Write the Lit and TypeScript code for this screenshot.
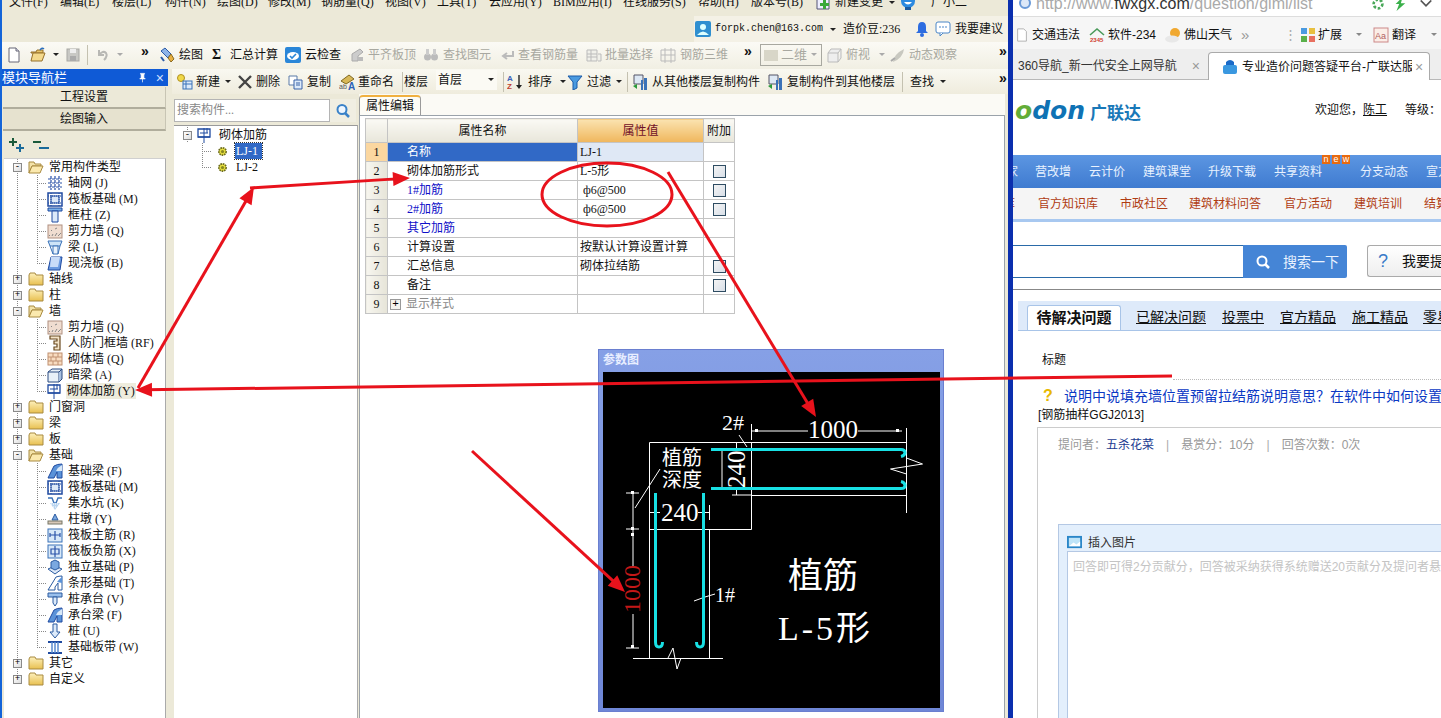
import { LitElement, css, html, svg } from "lit";
import { customElement } from "lit/decorators.js";

// small icon helper, everything is drawn on a 16x16 box
const ic = (body: unknown, w = 16, h = 16) =>
  html`<svg class="ic" width=${w} height=${h} viewBox="0 0 16 16">${body}</svg>`;

const icons: Record<string, unknown> = {
  file: svg`<path d="M3 1h7l3 3v11H3z" fill="#fff" stroke="#667"/><path d="M10 1v3h3" fill="#dde" stroke="#667"/>`,
  open: svg`<path d="M1 5h5l1-2h6v3H1z" fill="#e8c468" stroke="#96702a"/><path d="M1 14l2-8h12l-3 8z" fill="#f4d98c" stroke="#96702a"/><path d="M10 3q2-3 4-1" fill="none" stroke="#2a6fc0" stroke-width="1.4"/>`,
  save: svg`<rect x="2" y="2" width="12" height="12" fill="#c8c8c4" stroke="#a8a8a4"/><rect x="5" y="2" width="6" height="4" fill="#eee"/><rect x="5" y="9" width="6" height="5" fill="#aaa"/>`,
  undo: svg`<path d="M4 3v5h5M4 8q4-5 7-2q2 3-2 7" fill="none" stroke="#b8b8b4" stroke-width="2"/>`,
  draw: svg`<path d="M2 4l4-3 6 6-3 4z" fill="#8fb4e8" stroke="#2a5aa8"/><path d="M9 11l3-4 3 5-3 3z" fill="#e8b040" stroke="#8a6a20"/><path d="M2 10l3 4" stroke="#2a5aa8" stroke-width="2"/>`,
  cloud: svg`<rect x="0" y="0" width="16" height="16" rx="2" fill="#2a86d8"/><ellipse cx="8" cy="9" rx="6" ry="4" fill="#fff"/><path d="M5 9l2 2 4-4" fill="none" stroke="#2a86d8" stroke-width="1.6"/>`,
  g1: svg`<path d="M3 14V7l8-5 3 3-5 4v5z" fill="#ccc" stroke="#aaa"/><rect x="9" y="10" width="5" height="4" fill="#bbb"/>`,
  g2: svg`<circle cx="4.500" cy="10" r="3.500" fill="#bbb"/><circle cx="11.500" cy="10" r="3.500" fill="#bbb"/><rect x="3" y="2" width="3" height="6" fill="#ccc"/><rect x="10" y="2" width="3" height="6" fill="#ccc"/>`,
  g3: svg`<path d="M14 4v5H5M8 6L4 9l4 3" fill="none" stroke="#bbb" stroke-width="2"/>`,
  g4: svg`<path d="M1 3h10v11H1zM1 7h10M1 10h10M5 3v11M12 7h3v7h-3" fill="#f0f0ea" stroke="#bbb"/>`,
  g5: svg`<path d="M1 3h14v11H1zM5 1v15M11 1v15M1 8h14" fill="none" stroke="#bbb"/>`,
  g6: svg`<path d="M2 6h10v9H2zM2 6l3-4h10l-3 4M12 15l3-4V2" fill="#eee" stroke="#bbb"/>`,
  g7: svg`<path d="M3 15q1-8 11-13q-1 9-11 13z" fill="#c8c8c0"/><path d="M1 14l4-3" stroke="#aaa" stroke-width="2"/>`,
  user: svg`<rect x="0" y="0" width="16" height="16" rx="2" fill="#2f8fd0"/><circle cx="8" cy="6" r="3" fill="#dff"/><path d="M2 14q6-7 12 0z" fill="#dff"/>`,
  bell: svg`<path d="M8 1q4 0 4 5v4l2 2H2l2-2V6q0-5 4-5z" fill="#2d6ce0"/><circle cx="8" cy="14" r="2" fill="#2d6ce0"/>`,
  chat: svg`<rect x="1" y="1" width="14" height="11" rx="2" fill="#fff" stroke="#4a86c8"/><path d="M5 12v3l3-3" fill="#fff" stroke="#4a86c8"/><path d="M4 6h8" stroke="#4a86c8" stroke-dasharray="2 1"/>`,
  change: svg`<path d="M2 1h9l3 3v11H2z" fill="#eef" stroke="#557"/><path d="M11 6v3h3v3h-3v3H8v-3H5V9h3V6z" fill="#3aa83a"/>`,
  mascot: svg`<circle cx="8" cy="7" r="7" fill="#2b8ae0"/><path d="M4 8q4 5 8 0z" fill="#fff"/><rect x="5" y="13" width="6" height="3" fill="#1a5aa0"/>`,
  add: svg`<circle cx="4" cy="4" r="3.500" fill="#f0d848" stroke="#b09020"/><rect x="6" y="7" width="9" height="8" fill="#dceafa" stroke="#3a72b8"/><path d="M6 10h9M9 7v8" stroke="#3a72b8"/>`,
  del: svg`<path d="M2 2l12 12M14 2L2 14" stroke="#444" stroke-width="2.400"/>`,
  copy: svg`<path d="M1 2h8v9H1z" fill="#fff" stroke="#5a7aa8"/><path d="M6 6h8v9H6z" fill="#dceafa" stroke="#3a62a8"/><path d="M8 9h4M8 11h4" stroke="#3a62a8"/>`,
  rename: svg`<path d="M2 7l8-6 5 4-8 5z" fill="#d8b858" stroke="#806820"/><text x="0" y="15" font-size="7" fill="#555" font-family="Liberation Sans">ab</text><text x="9" y="16" font-size="10" font-weight="700" fill="#2a62b8" font-family="Liberation Sans">A</text>`,
  sort: svg`<text x="0" y="7" font-size="8" font-weight="700" fill="#3a62b8" font-family="Liberation Sans">A</text><text x="0" y="15" font-size="8" font-weight="700" fill="#c04030" font-family="Liberation Sans">Z</text><path d="M12 1v12" stroke="#222" stroke-width="1.400"/><path d="M9 11l3 4 3-4z" fill="#222"/>`,
  filter: svg`<path d="M1 2h14L10 8v6l-4 2V8z" fill="#4a9ae0" stroke="#1a5aa8"/>`,
  from: svg`<path d="M2 1h9v9H2z" fill="#dde8f4" stroke="#556"/><path d="M1 12l4-2v5z" fill="#2a9a3a"/><path d="M9 6h2v10H9zM12 4h3v12h-3z" fill="#3a72b8"/>`,
  folder: svg`<path d="M1 4l1-2h5l1 2h7v10H1z" fill="url(#fg)" stroke="#a88a40"/>`,
  folderOpen: svg`<path d="M1 3h5l1 2h6v2H4l-3 7z" fill="#f3e2a8" stroke="#a88a40"/><path d="M1 14l3-7h11l-3 7z" fill="#fbe9ae" stroke="#a88a40"/>`,
  grid: svg`<path d="M1 4h14M1 8h14M1 12h14M4 1v14M8 1v14M12 1v14" stroke="#2a52a8" stroke-width="1.200" stroke-dasharray="3 1"/>`,
  raft: svg`<rect x="1" y="2" width="14" height="13" fill="#fff" stroke="#1f4aa0" stroke-width="1.500"/><rect x="4" y="5" width="8" height="7" fill="#dce8f8" stroke="#1f4aa0"/><path d="M1 5h14M1 12h14M4 2v13M12 2v13" stroke="#1f4aa0" stroke-dasharray="1 1"/>`,
  col: svg`<path d="M1 1h14v3H1z" fill="#7ab0e8" stroke="#1f4aa0"/><path d="M5 4h6v11H5z" fill="#dceafa" stroke="#1f4aa0"/>`,
  shear: svg`<rect x="1" y="2" width="14" height="13" fill="#f0ddd0" stroke="#b09080"/><path d="M2 13l1-1M5 13l1-2M8 13l2-3M11 13l3-3M4 8l1-1M8 6l2-1" stroke="#888"/>`,
  beam: svg`<path d="M1 2h14l-2 5H3z" fill="#cde4f8" stroke="#3a72b8"/><path d="M6 7h5v8H6zM3 7l3 8M13 7l-2 8" fill="#e8f2fc" stroke="#3a72b8"/>`,
  slab: svg`<path d="M4 2h11l-2 13H1z" fill="#6a9ae0" stroke="#1f4aa0"/><path d="M4 2h9l-2 10H3z" fill="#c8dcf8"/>`,
  door: svg`<path d="M3 1h10v14H7v-3h3V9H7V6h3V4H3z" fill="#f4e4c8" stroke="#6a4a20" stroke-width="1.200"/>`,
  brick: svg`<rect x="1" y="2" width="14" height="12" fill="#f8dcc0" stroke="#c09070"/><path d="M1 6h14M1 10h14M6 2v4M11 2v4M4 6v4M9 6v4M6 10v4M11 10v4" stroke="#c09070"/>`,
  dark: svg`<path d="M1 5l4-3h10l-3 3v10H1z" fill="#e8f0f8" stroke="#2a4a80"/><path d="M1 5h11M12 5l3-3v10l-3 3" fill="#a8c0e0" stroke="#2a4a80"/>`,
  masonry: svg`<path d="M1 2h12v8H1z" fill="#fff" stroke="#1f4aa0" stroke-width="1.300"/><path d="M7 1v15M1 10h12M3 6h8M10 1v5" stroke="#1f4aa0"/>`,
  fbeam: svg`<path d="M1 15l6-12q3-2 8-2v14H10V9l-3 6z" fill="#5a92d8" stroke="#1f4aa0"/><path d="M9 8q2-4 6-6v6z" fill="#d8e8f8"/>`,
  pit: svg`<path d="M1 3h4l2 5h2l2-5h4" fill="none" stroke="#3a72b8" stroke-width="1.400"/><path d="M3 8l5 7 5-7z" fill="#b8d4f0"/><path d="M4 9h8M6 12h4" stroke="#fff" stroke-dasharray="1 1"/>`,
  pier: svg`<path d="M8 3l3 6H5z" fill="#7aa8e0" stroke="#2a5aa0"/><rect x="1" y="10" width="14" height="3" fill="#d8c8b8" stroke="#776"/>`,
  main: svg`<rect x="1" y="2" width="14" height="13" fill="#d8e8f8" stroke="#3a72b8"/><path d="M8 4v9M3 8h10M3 6v4M13 6v4" stroke="#2a52a8" stroke-width="1.200"/>`,
  neg: svg`<rect x="1" y="2" width="14" height="13" fill="#d8e8f8" stroke="#3a72b8"/><path d="M8 3v11M4 6h8v5H4z" fill="none" stroke="#2a52a8" stroke-width="1.200"/>`,
  iso: svg`<path d="M1 10l7-3 7 3-7 5z" fill="#dce8f8" stroke="#2a5aa0"/><path d="M4 3l4-2 4 2v6l-4 2-4-2z" fill="#7aa8e0" stroke="#2a5aa0"/>`,
  strip: svg`<path d="M1 15l5-8 3-5q3-1 6-1v14h-4V8l-3 4v3z" fill="#fff" stroke="#2a5aa0"/><path d="M10 7q2-3 5-5v6z" fill="#5a92d8"/>`,
  cap: svg`<path d="M1 2h14v4H1z" fill="#9ac0ec" stroke="#2a5aa0"/><path d="M6 6h4v6l-2 3-2-3z" fill="#dceafa" stroke="#2a5aa0"/>`,
  pile: svg`<path d="M6 1h4v8h3l-5 6-5-6h3z" fill="#dceafa" stroke="#2a5aa0"/>`,
  band: svg`<path d="M1 3h14M1 14h14" stroke="#1f4aa0" stroke-width="2"/><path d="M5 3v11M8 3v11M11 3v11" stroke="#5a8ad0" stroke-width="1.500"/>`,
  gear: svg`<circle cx="8" cy="8" r="4.500" fill="#e8e040" stroke="#6a6a20" stroke-dasharray="2 1" stroke-width="2"/><circle cx="8" cy="8" r="2" fill="#8a8a20"/>`,
};

const tree: [string, string, string?][] = [
  ["open", "常用构件类型"],
  ["c", "轴网 (J)", "grid"],
  ["c", "筏板基础 (M)", "raft"],
  ["c", "框柱 (Z)", "col"],
  ["c", "剪力墙 (Q)", "shear"],
  ["c", "梁 (L)", "beam"],
  ["l", "现浇板 (B)", "slab"],
  ["closed", "轴线"],
  ["closed", "柱"],
  ["open", "墙"],
  ["c", "剪力墙 (Q)", "shear"],
  ["c", "人防门框墙 (RF)", "door"],
  ["c", "砌体墙 (Q)", "brick"],
  ["c", "暗梁 (A)", "dark"],
  ["l", "砌体加筋 (Y)", "masonry"],
  ["closed", "门窗洞"],
  ["closed", "梁"],
  ["closed", "板"],
  ["open", "基础"],
  ["c", "基础梁 (F)", "fbeam"],
  ["c", "筏板基础 (M)", "raft"],
  ["c", "集水坑 (K)", "pit"],
  ["c", "柱墩 (Y)", "pier"],
  ["c", "筏板主筋 (R)", "main"],
  ["c", "筏板负筋 (X)", "neg"],
  ["c", "独立基础 (P)", "iso"],
  ["c", "条形基础 (T)", "strip"],
  ["c", "桩承台 (V)", "cap"],
  ["c", "承台梁 (F)", "fbeam"],
  ["c", "桩 (U)", "pile"],
  ["l", "基础板带 (W)", "band"],
  ["closed", "其它"],
  ["closed", "自定义"],
];

type Item = { x: number; i?: string; t?: string; off?: boolean; k?: string; g?: number };

const menu: Item[] = [
  { x: 9, t: "文件(F)" }, { x: 60, t: "编辑(E)" }, { x: 112, t: "楼层(L)" }, { x: 165, t: "构件(N)" },
  { x: 217, t: "绘图(D)" }, { x: 268, t: "修改(M)" }, { x: 321, t: "钢筋量(Q)" }, { x: 385, t: "视图(V)" },
  { x: 437, t: "工具(T)" }, { x: 489, t: "云应用(Y)" }, { x: 553, t: "BIM应用(I)" }, { x: 623, t: "在线服务(S)" },
  { x: 698, t: "帮助(H)" }, { x: 751, t: "版本号(B)" }, { x: 815, i: "change", t: "新建变更", g: 4 },
  { x: 888, k: "dd" }, { x: 900, i: "mascot", t: "广小二", g: 15 },
];

const account: Item[] = [
  { x: 695, i: "user" }, { x: 715, t: "forpk.chen@163.com", k: "mono" }, { x: 829, k: "dd" }, { x: 843, t: "造价豆:236" },
  { x: 914, i: "bell" }, { x: 935, i: "chat", t: "我要建议", g: 4 },
];

const tools: Item[] = [
  { x: 6, i: "file" }, { x: 30, i: "open" }, { x: 52, k: "dd" }, { x: 65, i: "save" }, { x: 87, k: "sep" }, { x: 95, i: "undo" },
  { x: 116, k: "dd off" }, { x: 141, t: "»", k: "more" }, { x: 159, i: "draw", t: "绘图", g: 4 }, { x: 212, t: "Σ", k: "sigma" },
  { x: 230, t: "汇总计算" }, { x: 285, i: "cloud", t: "云检查", g: 4 }, { x: 349, i: "g1", t: "平齐板顶", off: true, g: 3 },
  { x: 423, i: "g2", t: "查找图元", off: true, g: 4 }, { x: 499, i: "g3", t: "查看钢筋量", off: true, g: 3 },
  { x: 586, i: "g4", t: "批量选择", off: true, g: 3 }, { x: 660, i: "g5", t: "钢筋三维", off: true, g: 4 },
  { x: 744, t: "»", k: "more" }, { x: 760, t: "二维", k: "combo" }, { x: 826, i: "g6", t: "俯视", off: true, g: 4 },
  { x: 878, k: "dd off" }, { x: 890, i: "g7", t: "动态观察", off: true, g: 3 }, { x: 999, t: "»", k: "more" },
];

const tools2: Item[] = [
  { x: 177, i: "add", t: "新建", g: 3 }, { x: 224, k: "dd" }, { x: 237, i: "del", t: "删除", g: 3 }, { x: 288, i: "copy", t: "复制", g: 3 },
  { x: 339, i: "rename", t: "重命名", g: 3 }, { x: 402, k: "sep" }, { x: 404, t: "楼层" }, { x: 436, t: "首层", k: "floor" },
  { x: 503, k: "sep" }, { x: 507, i: "sort", t: "排序", g: 5 }, { x: 559, k: "dd" }, { x: 567, i: "filter", t: "过滤", g: 4 },
  { x: 615, k: "dd" }, { x: 627, k: "sep" }, { x: 632, i: "from", t: "从其他楼层复制构件", g: 4 },
  { x: 767, i: "from", t: "复制构件到其他楼层", g: 4 }, { x: 902, k: "sep" }, { x: 910, t: "查找" }, { x: 939, k: "dd" },
  { x: 999, t: "»", k: "more" },
];

const rows = [
  { n: "名称", v: "LJ-1", sel: true },
  { n: "砌体加筋形式", v: "L-5形", chk: true },
  { n: "1#加筋", v: "\u00a0ф6@500", chk: true, blue: true },
  { n: "2#加筋", v: "\u00a0ф6@500", chk: true, blue: true },
  { n: "其它加筋", v: "", blue: true },
  { n: "计算设置", v: "按默认计算设置计算" },
  { n: "汇总信息", v: "砌体拉结筋", chk: true },
  { n: "备注", v: "", chk: true },
  { n: "显示样式", v: "", plus: true },
];

const cells = (items: Item[], end: number) =>
  items.map((it, n) => {
    const next = n + 1 < items.length ? items[n + 1].x : end;
    const k = it.k ?? "";
    return html`<div class="cell ${it.off ? "off" : ""}" style="width:${next - it.x}px">
      ${k.startsWith("dd") ? html`<i class="dd ${k}"></i>` : ""}
      ${k === "sep" ? html`<i class="sep"></i>` : ""}
      ${it.i ? ic(icons[it.i]) : ""}
      ${it.t
        ? html`<span class=${k} style=${it.g ? `margin-left:${it.g}px` : ""}>${it.t}${k === "floor" || k === "combo" ? html`<i class="dd ${k === "combo" ? "off" : ""}"></i>` : ""}</span>`
        : ""}
    </div>`;
  });

const navLinks: [number, string][] = [
  [1006, "家"], [1035, "营改增"], [1089, "云计价"], [1143, "建筑课堂"], [1208, "升级下载"], [1274, "共享资料"], [1360, "分支动态"], [1426, "宣方"],
];
const subLinks: [number, string][] = [
  [1003, "库"], [1038, "官方知识库"], [1120, "市政社区"], [1189, "建筑材料问答"], [1284, "官方活动"], [1354, "建筑培训"], [1424, "结算"],
];
const qTabs: [number, string][] = [
  [1137, "已解决问题"], [1223, "投票中"], [1281, "官方精品"], [1353, "施工精品"], [1424, "零星"],
];

const arrow = (x1: number, y1: number, x2: number, y2: number) => {
  const a = Math.atan2(y2 - y1, x2 - x1);
  const p = (l: number, s: number) =>
    `${x2 - l * Math.cos(a) - s * Math.sin(a)},${y2 - l * Math.sin(a) + s * Math.cos(a)}`;
  return svg`<line x1=${x1} y1=${y1} x2=${x2 - 10 * Math.cos(a)} y2=${y2 - 10 * Math.sin(a)} /><polygon points="${x2},${y2} ${p(17, 7)} ${p(17, -7)}" />`;
};

@customElement("app-root")
export class AppRoot extends LitElement {
  static styles = css`
    :host {
      display: block;
      width: 1441px;
      height: 718px;
      overflow: hidden;
      position: relative;
      font: 12px/16px "Liberation Serif", "Noto Sans CJK SC", sans-serif;
      color: #111;
      background: #ece9d8;
    }
    .ic { flex: none; display: block; }
    .frame { display: flex; height: 718px; }
    .app { width: 1008px; flex: none; display: flex; flex-direction: column; overflow: hidden; background: #ece9d8; border-left: 2px solid #1464d8; box-sizing: border-box; }
    .divider { width: 5px; flex: none; background: #0b2fae; }
    .cell { display: flex; align-items: center; flex: none; white-space: nowrap; height: 100%; }
    .off { color: #a8a8a0; }
    .dd { display: inline-block; width: 0; height: 0; border: 3px solid transparent; border-top: 3px solid #222; border-bottom: 0; margin-left: 1px; }
    .dd.off { border-top-color: #aaa; }
    .sep { display: block; width: 1px; height: 20px; background: #c4c1b0; }
    .more { font: 700 14px/14px "Liberation Sans", sans-serif; margin-top: -8px; }
    .sigma { font: 700 14px/16px "Liberation Serif", serif; }
    .mono { font: 10px/16px "Liberation Mono", monospace; }
    .combo { display: flex; align-items: center; justify-content: space-between; box-sizing: border-box; width: 62px; height: 22px; padding: 0 4px 0 20px; border: 1px solid #a8a8a0; color: #a8a8a0; font-size: 13px; background: linear-gradient(#d8d6c8, #d8d6c8) no-repeat 3px 5px / 14px 11px; }
    .floor { display: flex; align-items: center; justify-content: space-between; box-sizing: border-box; width: 61px; height: 20px; padding: 0 3px 0 2px; background: #fbfaf4; font-size: 12px; margin-top: -4px; }
    .menu { height: 16px; overflow: hidden; }
    .menu-in { display: flex; height: 16px; margin-top: -6px; padding-left: 7px; font-size: 12px; }
    .acct-row { height: 26px; display: flex; justify-content: flex-end; }
    .acct { display: flex; width: 314px; background: #f4f1e6; padding-left: 1px; box-sizing: border-box; }
    .tools { height: 27px; display: flex; padding: 0 0 2px 4px; box-sizing: border-box; background: linear-gradient(#fbfaf5, #f1efe3); }
    .body { flex: 1; display: flex; min-height: 0; }
    .nav { width: 170px; flex: none; display: flex; flex-direction: column; }
    .nav-title { height: 17px; width: 166px; flex: none; background: #0f5ad6; color: #fff; font-size: 13px; display: flex; justify-content: space-between; align-items: center; padding: 0 4px 0 0; box-sizing: border-box; }
    .nav-ctl { display: flex; align-items: center; gap: 8px; font: 14px/14px "Liberation Sans", sans-serif; color: #cfe0ff; }
    .nav-btn { width: 163px; height: 22px; flex: none; margin-left: 1px; box-sizing: border-box; text-align: center; line-height: 21px; border-bottom: 2px solid #b0ad9c; border-right: 1px solid #c8c5b4; margin-top: 1px; }
    .nav-btn + .nav-btn { margin-top: 0; }
    .nav-btn.on { background: #e6e2cf; }
    .plus-row { height: 27px; flex: none; display: flex; gap: 8px; align-items: center; padding-left: 7px; width: 160px; }
    .tree { width: 161px; flex: 1; margin-left: 2px; background: #fff; border-right: 1px solid #aaa; border-top: 1px solid #d0d0d0; }
    .row { display: flex; height: 16px; align-items: center; white-space: nowrap; }
    .expw { width: 19px; height: 16px; flex: none; display: flex; align-items: center; justify-content: center; margin-left: 4px; background: repeating-linear-gradient(to bottom, #888 0 1px, transparent 1px 2px) no-repeat 9px 0 / 1px 100%; }
    .expw.end { background-size: 1px 50%; }
    .exp { width: 9px; height: 9px; box-sizing: border-box; border: 1px solid #8a8a8a; background: linear-gradient(135deg, #fff, #ddd); display: flex; align-items: center; justify-content: center; font: 9px/7px "Liberation Mono", monospace; color: #000; }
    .tail { width: 20px; height: 16px; flex: none; background:
      repeating-linear-gradient(to bottom, #888 0 1px, transparent 1px 2px) no-repeat 10px 0 / 1px 100%,
      repeating-linear-gradient(to right, #888 0 1px, transparent 1px 2px) no-repeat 10px 8px / 10px 1px; }
    .tail.last { background-size: 1px 50%, 10px 1px; }
    .lab { margin-left: 4px; padding: 0 1px; }
    .lab.cur { background: #eeecdd; margin-left: 3px; }
    .main-col { flex: 1; display: flex; flex-direction: column; min-width: 0; }
    .tools2 { height: 25px; flex: none; display: flex; padding-left: 5px; background: linear-gradient(#f9f8f1, #efecdd); }
    .panes { flex: 1; display: flex; min-height: 0; }
    .list { width: 186px; flex: none; padding-left: 2px; display: flex; flex-direction: column; box-sizing: border-box; }
    .search { height: 25px; margin-top: 4px; display: flex; align-items: center; flex: none; }
    .search .inp { width: 156px; height: 23px; box-sizing: border-box; border: 1px solid #b4b4b4; background: #fff; color: #888; line-height: 21px; padding-left: 2px; }
    .search .btn { width: 26px; height: 23px; background: #f0eee2; display: flex; align-items: center; justify-content: center; }
    .ltree { flex: 1; margin-top: 2px; background: #fff; border-top: 1px solid #9a9a9a; border-right: 1px solid #aaa; padding-top: 1px; }
    .ltree .tail { background-position: 7px 0, 7px 8px; }
    .ltree .tail { width: 21px; margin-left: 21px; }
    .lsel { background: #3169c6; color: #fff; margin-left: 6px; padding: 0 4px 0 1px; outline: 1px dotted #333; }
    .ltxt { margin-left: 5px; padding: 0 1px; }
    .pane { flex: 1; display: flex; flex-direction: column; padding: 0 3px 0 3px; min-width: 0; }
    .pane-top { height: 21px; flex: none; display: flex; align-items: flex-end; background: #fbfaf5; margin-left: -2px; }
    .tab { width: 62px; height: 20px; box-sizing: border-box; background: #fdfcf6; border: 1px solid #9a9a9a; border-top: 2px solid #f0b040; border-bottom: 0; border-radius: 4px 4px 0 0; text-align: center; line-height: 18px; }
    .sheet { flex: 1; background: #fff; border: 1px solid #9aa2aa; border-bottom: 0; padding: 2px 5px; margin-left: -2px; }
    table { border-collapse: collapse; table-layout: fixed; width: 369px; }
    td, th { border: 1px solid #c4c4c4; height: 19px; padding: 0 2px; font-weight: 400; white-space: nowrap; overflow: hidden; box-sizing: border-box; }
    th { height: 24px; background: linear-gradient(#faf9f4, #e8e6da); }
    th.val { background: linear-gradient(#fbe3b0, #efb65c); color: #701028; }
    td.num { background: linear-gradient(to right, #f7f6ef, #e6e4d8); text-align: center; padding: 0; }
    td.num.on { background: #fbd7a0; }
    td.name { padding-left: 19px; }
    td.name.on { background: #3169c6; color: #fff; }
    td.val.on { background: #dfe8f5; }
    .blue { color: #1010c8; }
    .muted { color: #888; display: flex; align-items: center; margin-left: -17px; gap: 5px; }
    .pbox { width: 11px; height: 11px; box-sizing: border-box; border: 1px solid #999; background: #f4f4ee; color: #000; font: 11px/9px "Liberation Mono", monospace; text-align: center; }
    .chk { display: block; margin: 0 auto; width: 13px; height: 13px; box-sizing: border-box; border: 1px solid #2e4c62; background: linear-gradient(135deg, #f4f4f4, #d8dfe8); }

    .win { position: absolute; left: 598px; top: 349px; width: 346px; height: 363px; box-sizing: border-box; background: linear-gradient(#86a0e6, #6e86d6); border: 1px solid #6a7fd0; padding: 0 3px 3px 4px; display: flex; flex-direction: column; }
    .win-t { height: 22px; flex: none; color: #e8eeff; font-size: 12px; line-height: 20px; font-weight: 700; }
    .win svg { display: block; background: #000; }
    .dg-w { stroke: #fff; stroke-width: 1; fill: none; }
    .dg-c { stroke: #18e0e4; stroke-width: 3; fill: none; }
    .dg-t { fill: #fff; font-family: "Liberation Serif", "Noto Sans CJK SC", serif; }

    .web { flex: 1; min-width: 0; background: #fff; overflow: hidden; font-family: "Liberation Sans", "Noto Sans CJK SC", sans-serif; }
    .addr { height: 16px; display: flex; overflow: hidden; background: #fff; align-items: center; }
    .addr .url { font-size: 16px; line-height: 16px; margin-top: -9px; color: #aaa; width: 331px; padding-left: 27px; box-sizing: border-box; white-space: nowrap; }
    .addr .url b { font-weight: 400; color: #333; }
    .globe { width: 12px; height: 12px; border-radius: 50%; border: 2px solid #6a9ad8; background: #dce8f8; margin: -10px -22px 0 6px; flex: none; box-sizing: border-box; }
    .bar { height: 33px; background: #f6f6f6; display: flex; align-items: center; padding-top: 3px; box-sizing: border-box; border-top: 1px solid #ddd; }
    .tabs { height: 31px; background: #eeeeee; display: flex; align-items: flex-end; border-bottom: 1px solid #b8b8b8; box-sizing: border-box; }
    .btab { height: 27px; display: flex; align-items: center; white-space: nowrap; box-sizing: border-box; }
    .btab.a { background: #fff; width: 222px; border: 1px solid #aaa; border-bottom: 0; border-radius: 4px 4px 0 0; padding-left: 13px; margin-bottom: -1px; height: 28px; }
    .x { color: #999; font: 14px/14px "Liberation Sans", sans-serif; }
    .head { height: 75px; display: flex; align-items: flex-start; }
    .logo { display: flex; align-items: baseline; margin: 19px 0 0 2px; width: 300px; flex: none; overflow: hidden; white-space: nowrap; }
    .logo b { font: italic 700 25px/24px "DejaVu Sans", sans-serif; color: #0f72b4; }
    .logo b i { color: #63ad38; }
    .logo span { font: 700 17px/24px "Noto Sans CJK SC", sans-serif; color: #1878b8; margin-left: 5px; }
    .hello { margin-top: 22px; white-space: nowrap; display: flex; }
    .hello u { margin-right: 18px; }
    .nav1 { height: 33px; display: flex; background: linear-gradient(#5c96e2, #3f7bd0); color: #e8f2ff; align-items: center; overflow: hidden; }
    .nav1 span, .nav2 span { flex: none; white-space: nowrap; }
    .badge { position: relative; }
    .new { position: absolute; left: 48px; top: -9px; display: flex; gap: 2px; }
    .new i { width: 8px; height: 9px; background: #e86a10; color: #fff; font: 9px/9px "Liberation Sans", sans-serif; text-align: center; }
    .nav2 { height: 34px; display: flex; background: #f5f5f5; color: #b03c12; align-items: center; border-bottom: 3px solid #a8c8f0; box-sizing: border-box; overflow: hidden; }
    .find { display: flex; margin-top: 23px; height: 33px; }
    .finp { width: 230px; flex: none; box-sizing: border-box; border: 1px solid #2a6aa8; border-width: 1px 0; }
    .fbtn { width: 104px; flex: none; background: #4585d6; color: #e8f2ff; display: flex; align-items: center; gap: 12px; padding-left: 12px; box-sizing: border-box; font-size: 14px; border-radius: 0 2px 2px 0; }
    .ask { margin-left: 20px; flex: none; width: 90px; box-sizing: border-box; border: 1px solid #aaa; border-right: 0; border-radius: 3px 0 0 3px; background: linear-gradient(#fff, #eee); display: flex; align-items: center; gap: 14px; padding-left: 10px; white-space: nowrap; font-size: 14px; height: 32px; }
    .ask b { color: #3a7ac8; font: 400 18px/20px "Liberation Sans", sans-serif; }
    .hr { height: 1px; background: #888; margin-top: 11px; }
    .qt { margin: 11px 0 0 5px; height: 30px; background: #deeafa; display: flex; align-items: flex-end; border-bottom: 1px solid #a8c4e8; box-sizing: border-box; font-size: 14px; overflow: hidden; }
    .qt .act { flex: none; width: 94px; height: 26px; margin-left: 9px; background: #fff; border: 1px solid #a8c4e8; border-bottom: 0; border-radius: 3px 3px 0 0; box-sizing: border-box; text-align: center; font: 700 15px/23px "Liberation Sans", "Noto Sans CJK SC", sans-serif; margin-bottom: -1px; }
    .qt u { flex: none; color: #111; white-space: nowrap; line-height: 20px; margin-bottom: 3px; }
    .th { margin: 20px 0 0 29px; height: 18px; line-height: 18px; }
    .dot { margin: 10px 0 0 160px; border-top: 1px dotted #bbb; }
    .q { display: flex; margin: 7px 0 0 30px; gap: 9px; color: #0a38c4; font-size: 14px; line-height: 18px; white-space: nowrap; }
    .q b { color: #e8b800; font-size: 16px; width: 12px; flex: none; font-family: "Liberation Sans"; }
    .cat { margin: 2px 0 0 25px; line-height: 16px; font-size: 12px; }
    .box { margin: 4px 0 0 24px; border: 1px solid #ccc; border-right: 0; border-bottom: 0; height: 300px; padding: 9px 0 0 20px; color: #999; white-space: nowrap; }
    .box a { color: #1a3a90; }
    .box s { text-decoration: none; margin: 0 12px; color: #aaa; }
    .ins { margin: 71px 0 0 0; background: #e3effc; border: 1px solid #b4c8e4; border-right: 0; padding: 9px 0 0 8px; height: 200px; }
    .ins-t { display: flex; align-items: center; gap: 6px; color: #333; height: 17px; }
    .ta { margin-top: 0; height: 170px; background: #fff; border: 1px solid #b4c8e4; border-right: 0; color: #c4c4c4; padding: 7px 0 0 5px; white-space: nowrap; }

    .marks { position: absolute; left: 0; top: 0; pointer-events: none; }
    .marks line, .marks ellipse { stroke: #e8121c; stroke-width: 3; fill: none; }
    .marks polygon { fill: #e8121c; }
  `;

  renderTree() {
    return tree.map((r, i) => {
      const [k, t, ico] = r;
      if (k === "c" || k === "l") {
        return html`<div class="row">
          <div class="expw"></div>
          <div class="tail ${k === "l" ? "last" : ""}"></div>
          ${ic(icons[ico!])}
          <span class="lab ${t.startsWith("砌体加筋") ? "cur" : ""}">${t}</span>
        </div>`;
      }
      return html`<div class="row">
        <div class="expw ${i === tree.length - 1 ? "end" : ""}"><span class="exp">${k === "open" ? "-" : "+"}</span></div>
        <span style="width:1px"></span>
        ${ic(k === "open" ? icons.folderOpen : icons.folder)}
        <span class="lab">${t}</span>
      </div>`;
    });
  }

  renderLinks(list: [number, string][], base: number) {
    return list.map(([x, t], n) => {
      const w = (n + 1 < list.length ? list[n + 1][0] : x + 40) - x;
      const start = n === 0 ? x - base : 0;
      return html`<span class=${t === "共享资料" ? "badge" : ""} style="width:${w}px;margin-left:${start}px">${t}${t === "共享资料"
        ? html`<span class="new"><i>n</i><i>e</i><i>w</i></span>`
        : ""}</span>`;
    });
  }

  renderDiagram() {
    return html`<svg width="337" height="336" viewBox="603 372 337 336">
      <path class="dg-w" d="M649.500 442.500H751.500V529.500H649.500ZM751 442.500H906.500M751 495.500H906.500M906.500 428V513M649.500 529V658.500M709.500 529V658.500M633 658.500H723M668 658l5-10 4 21 4-11" />
      <path class="dg-w" d="M906.500 458l16 6-32 5 16 5M751.500 431H808M858 431H902M751.500 424V440M633 493V566M633 614V648M626 493H639M626 529H639M626 648H639M635 508L660 469" />
      <path class="dg-w" d="M650 512.500H660M698 512.500H709.500M709.500 505V520M722 449V488M736.500 443V449M736.500 488V495M732 495H751M739 435L747 447M694 601L705 597L715 594" />
      <path d="M755 429h3v3h-3zM896 429h3v3h-3zM631 491h3v3h-3zM631 527h3v3h-3zM631 533h3v3h-3zM631 645h3v3h-3zM654 511h3v3h-3zM702 511h3v3h-3z" fill="#fff" />
      <path class="dg-c" d="M711 449.500H901q4 0 4 3t-4 4M711 488.500H901q4 0 4-3t-4-4M655.500 493V642q0 5 3.500 5t3.500-5M703.500 493V642q0 5-3.500 5t-3.500-5" />
      <text class="dg-t" x="722" y="430" font-size="22">2#</text>
      <text class="dg-t" x="808" y="438" font-size="25">1000</text>
      <text class="dg-t" x="662" y="465" font-size="20">植筋</text>
      <text class="dg-t" x="662" y="487" font-size="20">深度</text>
      <text class="dg-t" x="661" y="521" font-size="25">240</text>
      <text class="dg-t" transform="translate(745 488) rotate(-90)" font-size="25">240</text>
      <text class="dg-t" transform="translate(640 613) rotate(-90)" font-size="24" style="fill:#c41818">1000</text>
      <text class="dg-t" x="715" y="602" font-size="20">1#</text>
      <text class="dg-t" x="788" y="588" font-size="35">植筋</text>
      <text class="dg-t" x="778" y="640" font-size="34" textLength="92" lengthAdjust="spacing">L-5形</text>
    </svg>`;
  }

  render() {
    return html`
      <svg width="0" height="0" style="position:absolute"><defs><linearGradient id="fg" x1="0" y1="0" x2="0" y2="1"><stop offset="0" stop-color="#fdf0bc" /><stop offset="1" stop-color="#e8c050" /></linearGradient></defs></svg>
      <div class="frame">
        <div class="app">
          <div class="menu"><div class="menu-in">${cells(menu, 1006)}</div></div>
          <div class="acct-row"><div class="acct">${cells(account, 1008)}</div></div>
          <div class="tools">${cells(tools, 1006)}</div>
          <div class="body">
            <div class="nav">
              <div class="nav-title">
                <span>模块导航栏</span>
                <span class="nav-ctl">${ic(svg`<path d="M5 2h6v1l-1 1v4l2 2H4l2-2V4L5 3zM8 10v5" fill="#fff" stroke="#fff"/>`, 11, 11)}<span>×</span></span>
              </div>
              <div class="nav-btn">工程设置</div>
              <div class="nav-btn on">绘图输入</div>
              <div class="plus-row">
                ${ic(svg`<path d="M4 1v8M0 5h8" stroke="#1a5a3a" stroke-width="2"/><path d="M11 7v8M7 11h8" stroke="#1a6a9a" stroke-width="2"/>`)}
                ${ic(svg`<path d="M0 5h8" stroke="#1a5a3a" stroke-width="2"/><path d="M6 11h10" stroke="#1a6a9a" stroke-width="2"/>`)}
              </div>
              <div class="tree">${this.renderTree()}</div>
            </div>
            <div class="main-col">
              <div class="tools2">${cells(tools2, 1006)}</div>
              <div class="panes">
                <div class="list">
                  <div class="search">
                    <div class="inp">搜索构件...</div>
                    <div class="btn">${ic(svg`<circle cx="7" cy="6.500" r="4.500" fill="#eef6ff" stroke="#3a82c8" stroke-width="2"/><path d="M10 10l4 4" stroke="#3a82c8" stroke-width="2.500"/>`)}</div>
                  </div>
                  <div class="ltree">
                    <div class="row"><div class="expw"><span class="exp">-</span></div>${ic(icons.masonry)}<span class="ltxt">砌体加筋</span></div>
                    <div class="row"><div class="tail"></div>${ic(icons.gear, 13, 13)}<span class="lsel">LJ-1</span></div>
                    <div class="row"><div class="tail last"></div>${ic(icons.gear, 13, 13)}<span class="ltxt" style="margin-left:6px">LJ-2</span></div>
                  </div>
                </div>
                <div class="pane">
                  <div class="pane-top"><div class="tab">属性编辑</div></div>
                  <div class="sheet">
                    <table>
                      <colgroup><col style="width:22px" /><col style="width:190px" /><col style="width:126px" /><col style="width:31px" /></colgroup>
                      <tr><th></th><th>属性名称</th><th class="val">属性值</th><th>附加</th></tr>
                      ${rows.map(
                        (r, i) => html`<tr>
                          <td class="num ${r.sel ? "on" : ""}">${i + 1}</td>
                          <td class="name ${r.sel ? "on" : ""} ${r.blue ? "blue" : ""}">
                            ${r.plus ? html`<div class="muted"><span class="pbox">+</span>${r.n}</div>` : r.n}
                          </td>
                          <td class="val ${r.sel ? "on" : ""}">${r.v}</td>
                          <td>${r.chk ? html`<span class="chk"></span>` : ""}</td>
                        </tr>`
                      )}
                    </table>
                  </div>
                </div>
              </div>
            </div>
          </div>
        </div>
        <div class="divider"></div>
        <div class="web">
          <div class="addr">
            <span class="globe"></span>
            <div class="url">http://www.<b>fwxgx.com</b>/question/gimi/list</div>
            <span style="margin:-8px 0 0 31px">${ic(svg`<circle cx="8" cy="8" r="5" fill="none" stroke="#4aa85a" stroke-width="3" stroke-dasharray="3 2"/>`, 14, 14)}</span>
            <span style="margin:-8px 0 0 8px">${ic(svg`<path d="M11 0L3 8h4l-3 8 10-9H9z" fill="#3ab04a"/>`, 14, 14)}</span>
            <span style="margin:-8px 0 0 12px">${ic(svg`<path d="M2 4l6 6 6-6" fill="none" stroke="#555" stroke-width="2"/>`, 14, 14)}</span>
          </div>
          <div class="bar">
            <span style="margin-left:2px">${ic(svg`<path d="M3 1h7l3 3v11H3z" fill="#fff" stroke="#aaa"/>`, 14, 14)}</span>
            <span style="margin-left:3px;width:57px">交通违法</span>
            ${ic(svg`<path d="M1 8l7-6 7 6" fill="none" stroke="#4a9a5a" stroke-width="1.600"/><text x="1" y="15" font-size="6" font-weight="700" fill="#d04030" font-family="Liberation Sans">2345</text>`)}
            <span style="margin-left:3px;width:57px">软件-234</span>
            ${ic(svg`<circle cx="10" cy="6" r="5" fill="#f0a830"/><ellipse cx="7" cy="12" rx="7" ry="3.500" fill="#e8e8e8"/>`)}
            <span style="margin-left:3px;width:57px">佛山天气</span>
            <span style="color:#999;width:43px;font-size:15px">»</span>
            <span style="color:#aaa;width:16px;font-size:13px">⋮</span>
            ${ic(svg`<rect x="1" y="1" width="6" height="6" fill="#4a9ae0"/><rect x="9" y="1" width="6" height="6" fill="#e8c040"/><rect x="1" y="9" width="6" height="6" fill="#5ab04a"/><rect x="9" y="9" width="6" height="6" fill="#e87060"/>`)}
            <span style="margin-left:2px;width:37px">扩展</span>
            <i class="dd" style="border-top-color:#888;width:0;margin-right:11px"></i>
            ${ic(svg`<rect x="1" y="1" width="14" height="14" fill="#fbeee8" stroke="#c88"/><text x="2" y="12" font-size="9" fill="#b06060" font-family="Liberation Sans">Aa</text>`)}
            <span style="margin-left:3px;width:38px">翻译</span>
            <i class="dd" style="border-top-color:#888"></i>
          </div>
          <div class="tabs">
            <div class="btab" style="width:195px;padding-left:5px;box-sizing:border-box;color:#333">360导航_新一代安全上网导航<span class="x" style="margin-left:15px">×</span></div>
            <div class="btab a">
              ${ic(svg`<path d="M4 3q4-4 8 0v3H4z" fill="#1a6ac8"/><rect x="1" y="6" width="14" height="9" rx="2" fill="#3a98e0"/>`)}
              <span style="margin-left:4px;width:170px;overflow:hidden">专业造价问题答疑平台-广联达服</span><span class="x" style="margin-left:3px">×</span>
            </div>
          </div>
          <div class="head">
            <div class="logo"><b><i>o</i>don</b><span>广联达</span></div>
            <div class="hello">欢迎您，<u>陈工</u>等级：</div>
          </div>
          <div class="nav1">${this.renderLinks(navLinks, 1013)}</div>
          <div class="nav2">${this.renderLinks(subLinks, 1013)}</div>
          <div class="find">
            <div class="finp"></div>
            <div class="fbtn">${ic(svg`<circle cx="7" cy="7" r="4.500" fill="none" stroke="#fff" stroke-width="2"/><path d="M10 10l4 4" stroke="#fff" stroke-width="2.500"/>`)}搜索一下</div>
            <div class="ask"><b>?</b>我要提问</div>
          </div>
          <div class="hr"></div>
          <div class="qt">
            <div class="act">待解决问题</div>
            ${qTabs.map(([x, t], n) => html`<u style="margin-left:${n === 0 ? 15 : x - qTabs[n - 1][0] - qTabs[n - 1][1].length * 14}px">${t}</u>`)}
          </div>
          <div class="th">标题</div>
          <div class="dot"></div>
          <div class="q"><b>?</b>说明中说填充墙位置预留拉结筋说明意思？在软件中如何设置</div>
          <div class="cat">[钢筋抽样GGJ2013]</div>
          <div class="box">
            提问者：<a>五杀花菜</a><s>|</s>悬赏分：10分<s>|</s>回答次数：0次
            <div class="ins">
              <div class="ins-t">${ic(svg`<rect x="0" y="1" width="16" height="13" fill="#2a86c8"/><rect x="2" y="3" width="12" height="9" fill="#bfe4f8"/><path d="M2 12l5-4 3 2 4-3v5z" fill="#fff"/>`, 15, 15)}插入图片</div>
              <div class="ta">回答即可得2分贡献分，回答被采纳获得系统赠送20贡献分及提问者悬赏分</div>
            </div>
          </div>
        </div>
      </div>
      <div class="win">
        <div class="win-t">参数图</div>
        ${this.renderDiagram()}
      </div>
      <svg class="marks" width="1441" height="718" viewBox="0 0 1441 718">
        <ellipse cx="607" cy="194.500" rx="65" ry="31.500" />
        ${arrow(138, 388, 254, 187)}
        ${arrow(250, 188, 410, 178)}
        ${arrow(1172, 376, 135, 390)}
        ${arrow(668, 172, 816, 417)}
        ${arrow(472, 451, 625, 592)}
      </svg>
    `;
  }
}
